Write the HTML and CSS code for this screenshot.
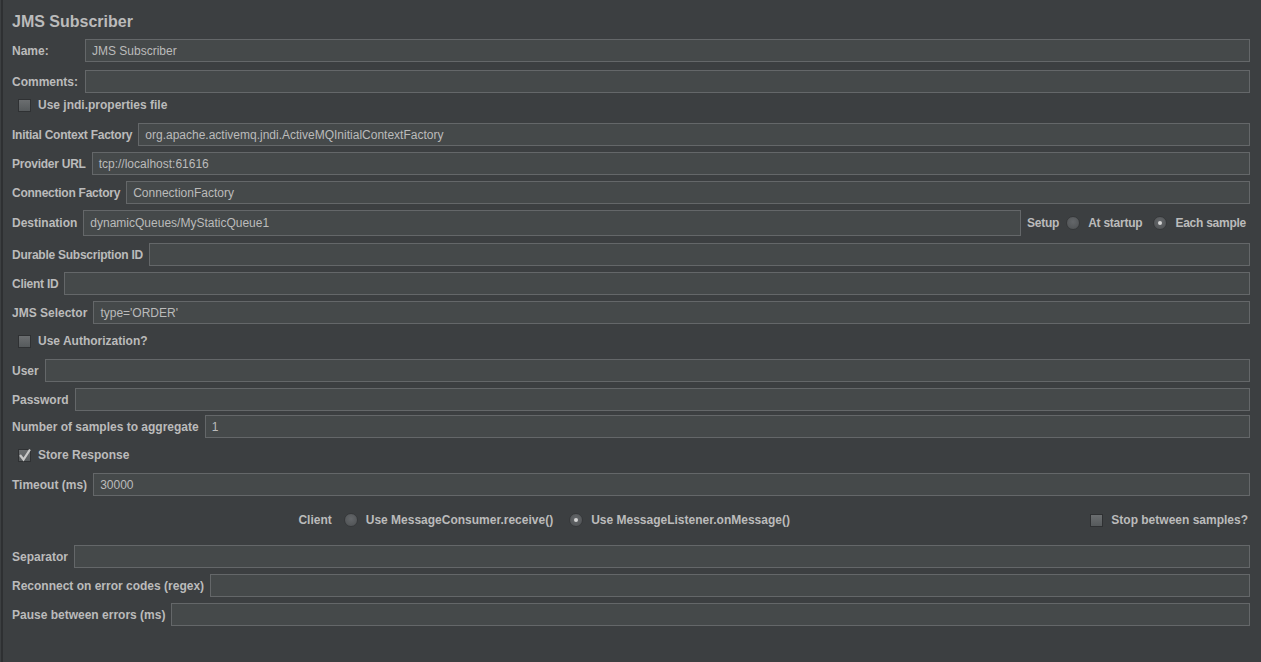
FILE: index.html
```html
<!DOCTYPE html>
<html lang="en">
<head>
    <title>JMS Subscriber</title>
    <meta charset="utf-8">
    <link rel="stylesheet" href="styles.css">
</head>
<body>
    <div class="panel">
        <h1 class="title">JMS Subscriber</h1>

        <div class="row row-name">
            <label class="label label-wide">Name:</label>
            <div class="field">JMS Subscriber</div>
        </div>
        <div class="row row-comments">
            <label class="label label-wide">Comments:</label>
            <div class="field"></div>
        </div>

        <div class="check-row">
            <span class="checkbox"></span>
            <span class="label">Use jndi.properties file</span>
        </div>

        <div class="row row-first">
            <label class="label narrow">Initial Context Factory</label>
            <div class="field">org.apache.activemq.jndi.ActiveMQInitialContextFactory</div>
        </div>
        <div class="row">
            <label class="label narrow">Provider URL</label>
            <div class="field">tcp://localhost:61616</div>
        </div>
        <div class="row">
            <label class="label narrow">Connection Factory</label>
            <div class="field">ConnectionFactory</div>
        </div>
        <div class="row row-dest">
            <label class="label">Destination</label>
            <div class="field">dynamicQueues/MyStaticQueue1</div>
            <div class="radio-group">
                <span class="label narrow">Setup</span>
                <span class="radio"></span>
                <span class="label narrow">At startup</span>
                <span class="radio checked"></span>
                <span class="label narrow">Each sample</span>
            </div>
        </div>
        <div class="row row-after-dest">
            <label class="label narrow">Durable Subscription ID</label>
            <div class="field"></div>
        </div>
        <div class="row">
            <label class="label narrow">Client ID</label>
            <div class="field"></div>
        </div>
        <div class="row">
            <label class="label">JMS Selector</label>
            <div class="field">type='ORDER'</div>
        </div>

        <div class="check-row check-auth">
            <span class="checkbox"></span>
            <span class="label">Use Authorization?</span>
        </div>

        <div class="row row-first">
            <label class="label">User</label>
            <div class="field"></div>
        </div>
        <div class="row">
            <label class="label">Password</label>
            <div class="field"></div>
        </div>
        <div class="row row-tight">
            <label class="label">Number of samples to aggregate</label>
            <div class="field">1</div>
        </div>

        <div class="check-row check-store">
            <span class="checkbox checked">
                <svg width="13" height="13" viewBox="0 0 13 13"><path d="M2 6 L5.5 10.5 L12 0.5" fill="none" stroke="#c8c8c8" stroke-width="2.2"/></svg>
            </span>
            <span class="label">Store Response</span>
        </div>

        <div class="row row-first">
            <label class="label">Timeout (ms)</label>
            <div class="field">30000</div>
        </div>

        <div class="client-row">
            <div class="client-group">
                <span class="label">Client</span>
                <span class="radio client-radio"></span>
                <span class="label">Use MessageConsumer.receive()</span>
                <span class="radio client-radio second checked"></span>
                <span class="label">Use MessageListener.onMessage()</span>
            </div>
            <div class="client-stop">
                <span class="checkbox"></span>
                <span class="label">Stop between samples?</span>
            </div>
        </div>

        <div class="row row-separator">
            <label class="label">Separator</label>
            <div class="field"></div>
        </div>
        <div class="row">
            <label class="label">Reconnect on error codes (regex)</label>
            <div class="field"></div>
        </div>
        <div class="row">
            <label class="label">Pause between errors (ms)</label>
            <div class="field"></div>
        </div>
    </div>
</body>
</html>
```

FILE: styles.css
```css
* {
    box-sizing: border-box;
    margin: 0;
    padding: 0;
}

html, body {
    height: 100%;
}

body {
    background: #3c3f41;
    color: #bbbbbb;
    font-family: "Liberation Sans", Arial, sans-serif;
    font-size: 12px;
    overflow: hidden;
}

.panel {
    height: 100%;
    margin-left: 1px;
    border-left: 2px solid #2e3032;
    padding: 0 11px 0 9px;
}

.title {
    font-size: 16px;
    font-weight: bold;
    height: 39px;
    line-height: 43px;
    color: #bbbbbb;
}

.label {
    font-weight: bold;
    white-space: nowrap;
}

.narrow {
    letter-spacing: -0.25px;
}

.label-wide {
    width: 67px;
    flex: none;
}

.row {
    display: flex;
    align-items: center;
    gap: 6px;
    height: 23px;
    margin-top: 6px;
}

.row-name {
    margin-top: 0;
}

.row-comments {
    margin-top: 8px;
}

.row-first {
    margin-top: 6px;
}

.row-tight {
    margin-top: 4px;
}

.row-dest {
    height: 26px;
}

.row-after-dest {
    margin-top: 7px;
}

.row-separator {
    margin-top: 13px;
}

.field {
    flex: 1;
    height: 100%;
    background: #45494a;
    border: 1px solid #646769;
    padding: 0 6px;
    display: flex;
    align-items: center;
    color: #bbbbbb;
    font-weight: normal;
    white-space: nowrap;
    overflow: hidden;
}

.check-row {
    display: flex;
    align-items: center;
    gap: 7px;
    height: 24px;
    padding-left: 6px;
}

.check-auth {
    margin-top: 5px;
}

.check-store {
    margin-top: 5px;
}

.checkbox {
    width: 13px;
    height: 13px;
    flex: none;
    border: 1px solid #2f3133;
    background: linear-gradient(#6b6e70, #565a5c);
    display: flex;
    align-items: center;
    justify-content: center;
    overflow: visible;
}

.checkbox svg {
    display: block;
    overflow: visible;
}

.radio-group {
    display: flex;
    align-items: center;
    flex: none;
    padding-right: 4px;
}

.radio {
    width: 14px;
    height: 14px;
    flex: none;
    border-radius: 50%;
    border: 1px solid #36383a;
    background: radial-gradient(circle at 50% 40%, #64676a, #4d5052);
    position: relative;
    margin: 0 8px 0 7px;
}

.radio-group .radio.checked {
    margin-left: 11px;
}

.radio.checked::after {
    content: "";
    position: absolute;
    left: 4px;
    top: 4px;
    width: 4px;
    height: 4px;
    border-radius: 50%;
    background: #d4d4d4;
}

.client-row {
    display: flex;
    align-items: center;
    height: 24px;
    margin-top: 12px;
}

.client-group {
    flex: 1;
    display: flex;
    align-items: center;
    justify-content: center;
    padding-right: 14px;
}

.client-radio {
    margin: 0 8px 0 12px;
}

.client-radio.second {
    margin-left: 16px;
}

.client-stop {
    display: flex;
    align-items: center;
    gap: 8px;
    padding-right: 2px;
}
```
